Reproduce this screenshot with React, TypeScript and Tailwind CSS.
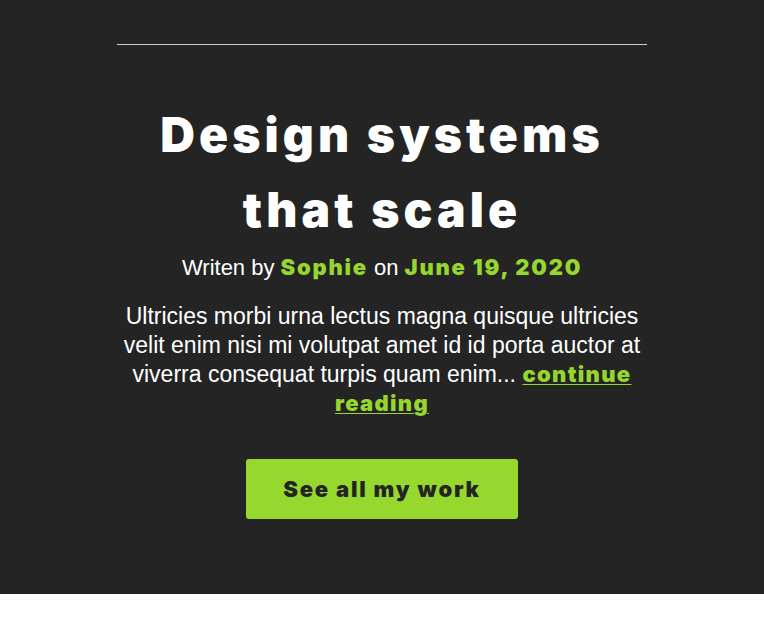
const heavy = 'font-["Inter",sans-serif] font-black'

export default function App() {
  return (
    <div className="bg-white min-h-screen font-['Liberation_Sans',Arial,sans-serif]">
      <section className="bg-[#242424] text-white pt-11 pb-[75px]">
        <div className="mx-auto w-[530px] text-center">
          <hr className="border-0 border-t border-[#cccccc]" />
          <h1 className={`mt-[52px] text-[48px] leading-[75px] tracking-[0.085em] ${heavy}`}>Design systems that scale</h1>
          <p className="mt-1.5 text-[22px] leading-7">
            Writen by <span className={`text-[#96d62e] tracking-[0.08em] ${heavy}`}>Sophie</span> on{' '}
            <span className={`text-[#96d62e] tracking-[0.08em] ${heavy}`}>June 19, 2020</span>
          </p>
          <p className="mt-5 text-[23px] leading-[29px]">
            Ultricies morbi urna lectus magna quisque ultricies velit enim nisi mi volutpat amet id id porta auctor at
            viverra consequat turpis quam enim...{' '}
            <a
              href="#"
              className={`text-[22px] text-[#96d62e] underline underline-offset-2 decoration-1 tracking-[0.06em] ${heavy}`}
            >
              continue reading
            </a>
          </p>
          <div className="mt-[41px]">
            <a
              href="#"
              className={`inline-flex items-center justify-center w-[272px] h-[60px] rounded-[3px] bg-[#97d82f] text-[#242424] text-[22px] tracking-[0.08em] ${heavy}`}
            >
              See all my work
            </a>
          </div>
        </div>
      </section>
    </div>
  )
}
